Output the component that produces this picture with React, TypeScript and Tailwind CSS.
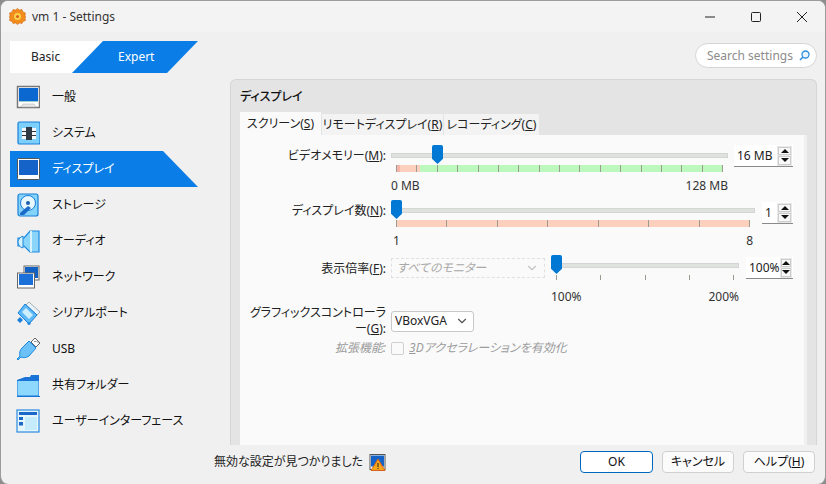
import type { ReactNode } from 'react';
import { ChevronDown } from 'lucide-react';

// Section icons are hand drawn, the VirtualBox set is not in any icon package
const icons: Record<string, ReactNode> = {
  general: (
    <>
      <rect x="1.5" y="1.5" width="22" height="21" fill="#fff" stroke="#777" strokeWidth="1.5" />
      <rect x="3" y="3" width="19" height="13" fill="#0a68d0" />
      <path d="M3 16h19v1H3z" fill="#9cc" />
      <path d="M5 22l2-3h11l2 3z" fill="#e8e8e8" stroke="#aaa" strokeWidth=".5" />
    </>
  ),
  system: (
    <>
      <rect x="2" y="1" width="22" height="22" rx="1.5" fill="#7dd0fb" stroke="#1a7fd8" strokeWidth="1.2" />
      <rect x="6" y="7" width="14" height="11" fill="#f4f8fb" />
      <rect x="10" y="6" width="6" height="13" fill="#2f3a45" />
      <path d="M6 10h4v1H6zM6 14h4v1H6zM16 10h4v1h-4zM16 14h4v1h-4z" fill="#333" />
    </>
  ),
  display: (
    <>
      <rect x="1.5" y="1.5" width="22" height="21" rx="1" fill="#fff" stroke="#555" strokeWidth="1" />
      <rect x="3" y="3" width="19" height="15" fill="#1562c8" />
    </>
  ),
  storage: (
    <>
      <rect x="2" y="1" width="20" height="22" rx="2" fill="#83d3fb" stroke="#1a7fd8" strokeWidth="1.2" />
      <circle cx="12" cy="10" r="7.5" fill="#e8f6fd" stroke="#1a7fd8" />
      <circle cx="12" cy="10" r="2" fill="#1a5fa8" />
      <path d="M4 20l8-7 3 2-7 7H4z" fill="#1a6cc8" />
    </>
  ),
  audio: (
    <>
      <path d="M2 9h6l6-7h9v21h-9l-6-6H2z" fill="#8bd5fb" stroke="#1a8ae0" strokeWidth="1.2" />
      <path d="M14 2h2v21h-2z" fill="#d8f2fe" />
      <path d="M2 12a7 7 0 0 1 5-5v12a7 7 0 0 1-5-7z" fill="#d6f1ff" stroke="#1a8ae0" />
    </>
  ),
  network: (
    <>
      <rect x="8" y="1" width="15" height="14" fill="#fff" stroke="#666" />
      <rect x="9" y="2" width="13" height="11" fill="#1160c4" />
      <rect x="1.5" y="8" width="17" height="15" fill="#fff" stroke="#666" />
      <rect x="3" y="9" width="14" height="11" fill="#1a6fd8" />
    </>
  ),
  serial: (
    <>
      <path d="M13 1l11 10-3 3L10 4z" fill="#e8f4fb" stroke="#aaa" />
      <path d="M9 3l12 11-8 9-11-11z" fill="#5cb8f6" stroke="#1a7fd8" />
      <path d="M10 7l7 7-4 4-7-7z" fill="#cdeeff" />
      <path d="M1 19l3-3 3 3-3 3zM11 23l2-2 2 2-2 1z" fill="#1a7fd8" />
    </>
  ),
  usb: (
    <>
      <path d="M15 5l4-4 5 5-4 4z" fill="#fafafa" stroke="#666" />
      <path d="M18.5 4l1 1M21 4.500l1 1" stroke="#333" />
      <path d="M13 4l7 7-7 8c-3 2-6 2-8 1l-3 3-1-1 3-3c-1-3 0-6 2-8z" fill="#6cc2f8" stroke="#1a8ae0" />
    </>
  ),
  folder: (
    <>
      <path d="M1 23V7l8-3h5l1-2h8v21z" fill="#1a74d8" />
      <path d="M1.500 22.500V8h21v14.500z" fill="#8ed8fd" />
      <path d="M1 23h23v1H1z" fill="#1a74d8" />
    </>
  ),
  ui: (
    <>
      <rect x="1" y="1" width="22" height="22" fill="#e6f6fd" stroke="#2a8ae0" strokeWidth="1.2" />
      <rect x="3" y="3" width="18" height="3" fill="#1a68c8" />
      <rect x="3" y="8" width="4" height="3" fill="#1a68c8" />
      <rect x="3" y="13" width="4" height="3.500" fill="#1a68c8" />
      <rect x="9" y="8" width="12" height="13" fill="#c6ecfc" />
    </>
  ),
};

const sections = [
  { key: 'general', label: '一般' },
  { key: 'system', label: 'システム' },
  { key: 'display', label: 'ディスプレイ', selected: true },
  { key: 'storage', label: 'ストレージ' },
  { key: 'audio', label: 'オーディオ' },
  { key: 'network', label: 'ネットワーク' },
  { key: 'serial', label: 'シリアルポート' },
  { key: 'usb', label: 'USB' },
  { key: 'folder', label: '共有フォルダー' },
  { key: 'ui', label: 'ユーザーインターフェース' },
];

function SectionItem({ iconKey, label, selected }: { iconKey: string; label: string; selected?: boolean }) {
  return (
    <div
      className={
        selected
          ? 'h-9 flex items-center pl-[6px] text-white bg-[#0a7ee6] [clip-path:polygon(0_0,153px_0,188px_100%,0_100%)]'
          : 'h-9 flex items-center pl-[6px] text-[#111]'
      }
    >
      <svg width="24" height="24" viewBox="0 0 24 24" className="shrink-0">
        {icons[iconKey]}
      </svg>
      <span className="ml-3">{label}</span>
    </div>
  );
}

function Spin({ value, width }: { value: string; width: string }) {
  return (
    <div className={`${width} h-[22px] flex items-center bg-white border-b border-[#8a8a8a] pl-[3px] pr-[1px] text-[#222]`}>
      <span className="flex-1">{value}</span>
      <div className="w-[15px] h-[20px] flex flex-col gap-[1px] bg-[#e8e8e8] p-[1px]">
        <div className="flex-1 flex items-center justify-center bg-[#f8f8f8] border border-[#ccc] text-[0]">
          <div className="w-0 h-0 border-x-[4px] border-x-transparent border-b-[4px] border-b-[#111]" />
        </div>
        <div className="flex-1 flex items-center justify-center bg-[#f8f8f8] border border-[#ccc] text-[0]">
          <div className="w-0 h-0 border-x-[4px] border-x-transparent border-t-[4px] border-t-[#111]" />
        </div>
      </div>
    </div>
  );
}

function Ticks({ count, className }: { count: number; className: string }) {
  return (
    <div className={`flex justify-between ${className}`}>
      {Array.from({ length: count }, (_, i) => (
        <div key={i} className="w-px h-full bg-[#9a9a90]" />
      ))}
    </div>
  );
}

function Thumb({ left }: { left: number }) {
  return (
    <div
      className="absolute top-0 w-[11px] h-[19px] bg-[#0078d4] rounded-t-[2px] [clip-path:polygon(0_0,100%_0,100%_72%,50%_100%,0_72%)]"
      style={{ left }}
    />
  );
}

function Groove() {
  return (
    <div className="h-[20px] flex items-center">
      <div className="w-full h-[5px] bg-[#dfe2df] border border-[#d4d6d4]" />
    </div>
  );
}

function FormLabel({ children, muted }: { children: ReactNode; muted?: boolean }) {
  return (
    <div className={muted ? 'w-[146px] shrink-0 text-right italic text-[#9c9c9c]' : 'w-[146px] shrink-0 text-right text-[#222]'}>
      {children}
    </div>
  );
}

function ScreenTab() {
  return (
    <div className="flex flex-col pt-[10px] pr-[11px]">
      <div className="flex items-start h-[55px]">
        <FormLabel>
          <div className="pt-[3px]">
            ビデオメモリー(<span className="underline">M</span>):
          </div>
        </FormLabel>
        <div className="relative w-[337px] ml-[5px]">
          <Groove />
          <Thumb left={41} />
          <div className="relative mx-[5px] h-[7px] flex">
            <div className="w-[4px] bg-[#f8b4a8]" />
            <div className="w-[20px] bg-[#fcd0bc]" />
            <div className="flex-1 bg-[#bdf8bd]" />
            <Ticks count={17} className="absolute inset-0" />
          </div>
          <div className="flex justify-between mt-[6px] text-[#333]">
            <span>0 MB</span>
            <span>128 MB</span>
          </div>
        </div>
        <div className="ml-[6px]">
          <Spin value="16 MB" width="w-[59px]" />
        </div>
      </div>

      <div className="flex items-start h-[55px]">
        <FormLabel>
          <div className="pt-[3px]">
            ディスプレイ数(<span className="underline">N</span>):
          </div>
        </FormLabel>
        <div className="relative w-[364px] ml-[5px]">
          <Groove />
          <Thumb left={0} />
          <div className="relative mx-[5px] h-[7px] bg-[#fcd0bc]">
            <Ticks count={8} className="absolute inset-0" />
          </div>
          <div className="flex justify-between mt-[6px] px-[2px] text-[#333]">
            <span>1</span>
            <span>8</span>
          </div>
        </div>
        <div className="ml-[7px] mt-[2px]">
          <Spin value="1" width="w-[31px]" />
        </div>
      </div>

      <div className="flex items-start h-[56px]">
        <FormLabel>
          <div className="pt-[6px]">
            表示倍率(<span className="underline">F</span>):
          </div>
        </FormLabel>
        <div className="w-[154px] h-[20px] mt-[3px] ml-[5px] flex items-center justify-between px-[5px] border border-dashed border-[#e0e0e0] italic text-[#a8a8a8]">
          <span>すべてのモニター</span>
          <ChevronDown size={14} className="text-[#c4c4c4]" />
        </div>
        <div className="relative w-[188px] ml-[6px]">
          <Groove />
          <Thumb left={0} />
          <Ticks count={5} className="mx-[5px] h-[5px]" />
          <div className="flex justify-between mt-[9px] text-[#333]">
            <span>100%</span>
            <span>200%</span>
          </div>
        </div>
        <div className="ml-[7px] mt-[2px]">
          <Spin value="100%" width="w-[47px]" />
        </div>
      </div>

      <div className="flex items-center h-[20px]">
        <FormLabel>
          グラフィックスコントローラー(<span className="underline">G</span>):
        </FormLabel>
        <div className="w-[83px] h-[21px] ml-[5px] flex items-center justify-between pl-[3px] pr-[4px] bg-white border border-[#c8c8c8] rounded-[3px] text-[#222]">
          <span>VBoxVGA</span>
          <ChevronDown size={14} className="text-[#555]" />
        </div>
      </div>

      <div className="flex items-center h-[20px] mt-[7px]">
        <FormLabel muted>拡張機能:</FormLabel>
        <div className="ml-[5px] w-[13px] h-[13px] border border-[#d0d0d0] rounded-[2px]" />
        <span className="ml-[5px] italic text-[#9c9c9c]">
          <span className="underline">3</span>Dアクセラレーションを有効化
        </span>
      </div>
    </div>
  );
}

function SettingsPanel() {
  return (
    <div className="h-[366px] bg-[#e4e4e4] border border-[#d6d6d6] border-b-0 rounded-t-[6px] flex flex-col pl-[9px] pr-[9px]">
      <div className="h-[32px] flex items-center pt-[1px] font-medium text-[#111]">ディスプレイ</div>
      <div className="flex items-end h-[23px] text-[#222]">
        <div className="w-[81px] h-[23px] flex items-center justify-center bg-[#fafafa]">
          スクリーン(<span className="underline">S</span>)
        </div>
        <div className="w-[121px] h-[21px] ml-[1px] flex items-center justify-center bg-[#f3f3f3]">
          リモートディスプレイ(<span className="underline">R</span>)
        </div>
        <div className="w-[95px] h-[21px] ml-[1px] flex items-center justify-center bg-[#f3f3f3]">
          レコーディング(<span className="underline">C</span>)
        </div>
      </div>
      <div className="flex-1 bg-[#fafafa] border-r-[3px] border-[#f0f0f0]">
        <ScreenTab />
      </div>
    </div>
  );
}

function FooterButton({ children, primary }: { children: ReactNode; primary?: boolean }) {
  return (
    <div
      className={
        primary
          ? 'h-[22px] w-[73px] flex items-center justify-center bg-white border border-[#0067c0] rounded-[4px] text-[#111]'
          : 'h-[22px] w-[72px] flex items-center justify-center bg-[#fbfbfb] border border-[#d0d0d0] rounded-[4px] text-[#111]'
      }
    >
      {children}
    </div>
  );
}

export default function App() {
  return (
    <div className="w-[826px] h-[484px] bg-[#8c8c8c] text-[12px] leading-[16px] font-['Noto_Sans','Noto_Sans_CJK_JP',sans-serif] [font-feature-settings:'palt']">
      <div className="w-full h-full flex flex-col bg-[#f0f0f0] border-l border-t border-r border-[#9c9c9c] rounded-[8px] overflow-hidden">
        <div className="h-[31px] shrink-0 flex items-center bg-[#f3f3f3] pl-[8px]">
          <svg width="17" height="17" viewBox="0 0 17 17">
            <path
              d="M8.500.500l2 1.500 2.500-.500 1 2.500 2.500 1-.500 2.500 1 1-1 1.500.500 2.500-2.500 1-1 2-2.500-.500-2 1.500-2-1.500-2.500.500-1-2-2.500-1 .500-2.500-1-1.500 1-1-.500-2.500 2.500-1 1-2.500 2.500.500z"
              fill="#f28c1c"
              stroke="#c95f10"
              strokeWidth=".5"
            />
            <circle cx="8.500" cy="8.500" r="3.500" fill="#fbd04a" />
            <circle cx="8.500" cy="8.500" r="1.500" fill="#d9601a" />
          </svg>
          <span className="ml-[6px] text-[#333]">vm 1 - Settings</span>
          <div className="ml-auto flex items-center text-[#222]">
            <svg width="46" height="12" viewBox="0 0 46 12">
              <path d="M0 6h10" stroke="#222" />
            </svg>
            <svg width="46" height="12" viewBox="0 0 46 12">
              <rect x=".5" y="1.500" width="9" height="9" rx="1" fill="none" stroke="#222" />
            </svg>
            <svg width="28" height="12" viewBox="0 0 28 12">
              <path d="M0 1l10 10M10 1L0 11" stroke="#222" />
            </svg>
          </div>
        </div>

        <div className="flex-1 flex">
          <div className="w-[229px] shrink-0 pl-[9px] pt-[9px]">
            <div className="flex w-[188px] h-[32px]">
              <div className="w-[93px] shrink-0 bg-white flex items-center pl-[21px] text-[#222] [clip-path:polygon(0_0,100%_0,62px_100%,0_100%)]">
                Basic
              </div>
              <div className="w-[126px] shrink-0 -ml-[31px] bg-[#0a7ee6] flex items-center pl-[46px] text-white [clip-path:polygon(31px_0,100%_0,95px_100%,0_100%)]">
                Expert
              </div>
            </div>
            <div className="mt-[6px] w-[188px]">
              {sections.map((s) => (
                <SectionItem key={s.key} iconKey={s.key} label={s.label} selected={s.selected} />
              ))}
            </div>
          </div>

          <div className="flex-1 flex flex-col pr-[9px]">
            <div className="h-[47px] flex items-center justify-end">
              <div className="w-[122px] h-[25px] flex items-center justify-between pl-[11px] pr-[6px] bg-white border border-[#d4d4d4] rounded-full text-[#8c8c8c]">
                <span>Search settings</span>
                <svg width="11" height="11" viewBox="0 0 11 11">
                  <circle cx="6.500" cy="4.500" r="3.500" fill="#eaf5fd" stroke="#2f8fe0" strokeWidth="1.300" />
                  <path d="M4 7L1 10" stroke="#2f8fe0" strokeWidth="1.600" />
                </svg>
              </div>
            </div>
            <SettingsPanel />
          </div>
        </div>

        <div className="h-[40px] shrink-0 flex items-center pl-[213px] pr-[10px] pb-[6px] text-[#222]">
          <span>無効な設定が見つかりました</span>
          <svg width="17" height="17" viewBox="0 0 17 17" className="ml-[6px]">
            <rect x="1" y=".5" width="15" height="15" fill="#fff" stroke="#555" />
            <rect x="2" y="1.500" width="13" height="11" fill="#1562c8" />
            <path d="M9 5l7 11.500H2z" fill="#f7a51c" stroke="#d9601a" />
            <path d="M9 9v4M9 14v1" stroke="#222" />
          </svg>
          <div className="ml-auto flex gap-[9px]">
            <FooterButton primary>OK</FooterButton>
            <FooterButton>キャンセル</FooterButton>
            <FooterButton>
              ヘルプ(<span className="underline">H</span>)
            </FooterButton>
          </div>
        </div>
      </div>
    </div>
  );
}
